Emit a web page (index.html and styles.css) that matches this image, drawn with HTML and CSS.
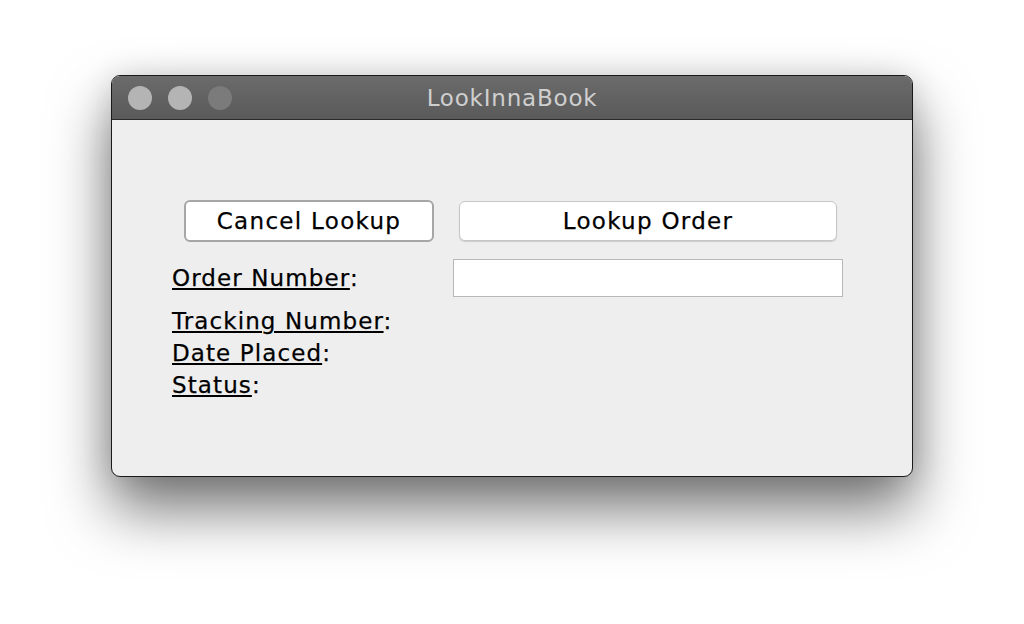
FILE: index.html
```html
<!DOCTYPE html>
<html>
<head>
<meta charset="utf-8">
<link rel="stylesheet" href="styles.css">
</head>
<body>
<div class="stage">
  <div class="window">
    <div class="titlebar">
      <div class="lights">
        <span class="light"></span>
        <span class="light"></span>
        <span class="light dim"></span>
      </div>
      <div class="title">LookInnaBook</div>
    </div>
    <div class="content">
      <div class="buttons">
        <button class="btn btn-cancel">Cancel Lookup</button>
        <button class="btn btn-lookup">Lookup Order</button>
      </div>
      <div class="field-row">
        <div class="label"><u>Order Number</u>:</div>
        <div class="input"></div>
      </div>
      <div class="info">
        <div class="label"><u>Tracking Number</u>:</div>
        <div class="label"><u>Date Placed</u>:</div>
        <div class="label"><u>Status</u>:</div>
      </div>
    </div>
  </div>
</div>
</body>
</html>
```

FILE: styles.css
```css
html, body {
  margin: 0;
  padding: 0;
  background: #ffffff;
  width: 1024px;
  height: 624px;
  overflow: hidden;
  font-family: "DejaVu Sans", "Liberation Sans", sans-serif;
}
.stage {
  display: flex;
  justify-content: center;
  padding-top: 75px;
}
.window {
  width: 800px;
  height: 400px;
  border: 1px solid #1a1a1a;
  border-radius: 9px;
  background: #eeeeee;
  overflow: hidden;
  box-shadow: 0 32px 60px rgba(0,0,0,0.55), 0 0 30px rgba(0,0,0,0.12);
  display: flex;
  flex-direction: column;
}
.titlebar {
  height: 43px;
  border-bottom: 1px solid #2a2a2a;
  background: linear-gradient(#6b6b6b, #5a5a5a);
  position: relative;
  display: flex;
  align-items: center;
  justify-content: center;
}
.lights {
  position: absolute;
  left: 16px;
  top: 10px;
  display: flex;
  gap: 16px;
}
.light {
  width: 24px;
  height: 24px;
  border-radius: 50%;
  background: #b4b4b4;
}
.light.dim {
  background: #7b7b7b;
}
.title {
  color: #cfcfcf;
  font-size: 23px;
  letter-spacing: 0.8px;
}
.content {
  flex: 1;
  padding-top: 80px;
}
.buttons {
  display: flex;
  align-items: flex-start;
  padding-left: 72px;
}
.btn {
  font-family: "DejaVu Sans", "Liberation Sans", sans-serif;
  font-size: 23px;
  letter-spacing: 1.3px;
  -webkit-text-stroke: 0.25px #000;
  color: #000;
  background: #ffffff;
  margin: 0;
  padding: 0;
}
.btn-cancel {
  width: 250px;
  height: 42px;
  border: 2px solid #a6a6a6;
  border-radius: 6px;
}
.btn-lookup {
  margin-left: 25px;
  margin-top: 1px;
  width: 378px;
  height: 40px;
  border: 1px solid #c6c6c6;
  border-radius: 6px;
  box-shadow: 0 1px 1px rgba(0,0,0,0.15);
}
.field-row {
  display: flex;
  align-items: center;
  padding-left: 60px;
  margin-top: 17px;
}
.field-row .label {
  width: 281px;
}
.input {
  width: 388px;
  height: 36px;
  background: #ffffff;
  border: 1px solid #b8b8b8;
}
.label {
  font-size: 23px;
  letter-spacing: 1.1px;
  -webkit-text-stroke: 0.25px #000;
  color: #000;
  line-height: 32px;
}
.label u {
  text-underline-offset: 2px;
  text-decoration-thickness: 2px;
}
.info {
  padding-left: 60px;
  margin-top: 8px;
}
```
